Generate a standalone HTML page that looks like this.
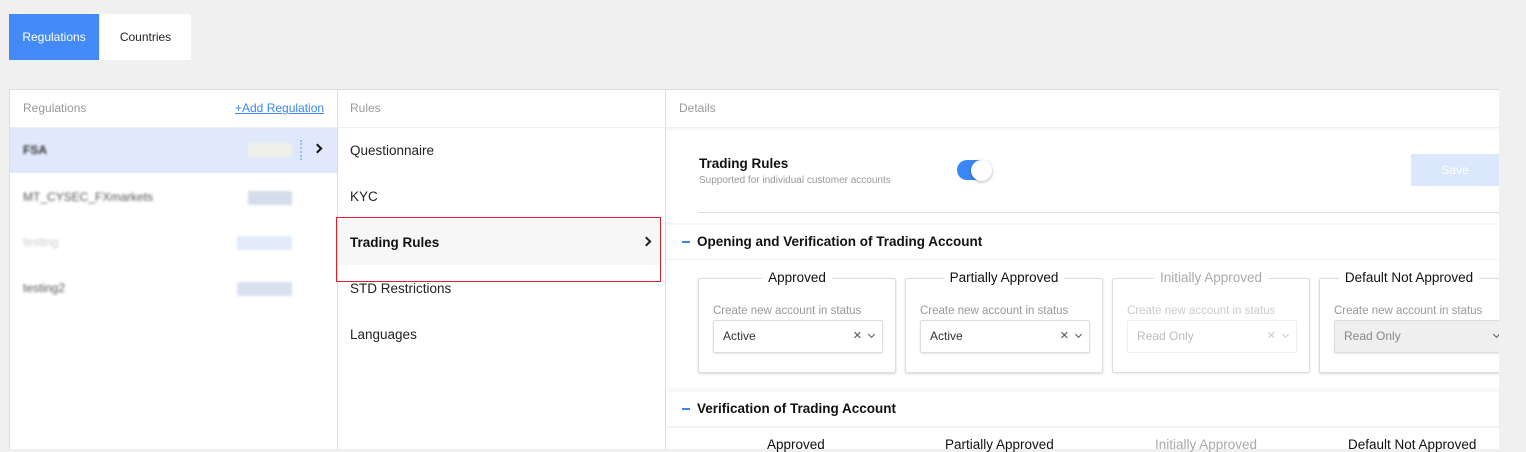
<!DOCTYPE html>
<html><head><meta charset="utf-8"><style>
*{box-sizing:border-box;margin:0;padding:0}
body{width:1526px;height:442px;background:#f0f0f0;font-family:"Liberation Sans",sans-serif;position:relative;overflow:hidden;color:#222}
.a{position:absolute}
.tab{top:14px;height:46px;line-height:46px;font-size:12px;text-align:center}
.blur{filter:blur(1.4px)}
.rule{left:350px;font-size:13.5px;color:#222}
.card{border:1px solid #ddd;border-radius:2px;box-shadow:0 1px 2px rgba(0,0,0,.15);background:#fff;top:278px;height:95px;width:198px}
.ct{position:absolute;top:-9px;left:0;right:0;text-align:center;font-size:13.5px;color:#111}
.ct span{background:#fff;padding:0 6px}
.lab{position:absolute;left:14px;top:26px;font-size:11.5px;color:#999}
.sel{position:absolute;left:14px;top:41px;width:170px;height:33px;border:1px solid #ddd;border-radius:2px;box-shadow:0 1px 2px rgba(0,0,0,.1);font-size:12px;line-height:31px;padding-left:9px;color:#333}
.x{position:absolute;right:20px;top:0;font-size:11px;color:#555}
.v{position:absolute;right:8px;width:5px;height:5px;border-right:1.5px solid #555;border-bottom:1.5px solid #555;transform:rotate(45deg);top:11px}
.sec{left:666px;width:833px;height:34px;background:#fff;box-shadow:0 1px 3px rgba(0,0,0,.06)}
.sec b{position:absolute;left:31px;top:9px;font-size:13.5px;color:#111}
.sec i{position:absolute;left:16px;top:16px;width:8px;height:2px;background:#3b86f7}
</style></head><body>
<div class="a tab" style="left:9px;width:90px;background:#438af7;color:#fff">Regulations</div>
<div class="a tab" style="left:100px;width:91px;background:#fff;color:#222">Countries</div>

<div class="a" style="left:9px;top:89px;width:1490px;height:360px;background:#fff;border-top:1px solid #ddd"></div>
<div class="a" style="left:9px;top:89px;width:1px;height:360px;background:#ddd"></div>
<div class="a" style="left:337px;top:89px;width:1px;height:360px;background:#ddd"></div>
<div class="a" style="left:665px;top:89px;width:1px;height:360px;background:#ddd"></div>
<div class="a" style="left:10px;top:127px;width:1489px;height:1px;background:#eee"></div>
<div class="a" style="left:23px;top:101px;font-size:12px;color:#999">Regulations</div>
<div class="a" style="left:235px;top:101px;font-size:12px;color:#3b86f7;text-decoration:underline">+Add Regulation</div>
<div class="a" style="left:350px;top:101px;font-size:12px;color:#999">Rules</div>
<div class="a" style="left:679px;top:101px;font-size:12px;color:#999">Details</div>

<div class="a" style="left:10px;top:128px;width:327px;height:45px;background:#dfe9fb"></div>
<div class="a blur" style="left:23px;top:143px;font-size:12px;color:#333;font-weight:bold">FSA</div>
<div class="a blur" style="left:248px;top:143px;width:44px;height:14px;background:#f0f0ea"></div>
<div class="a" style="left:300px;top:140px;width:2px;height:20px;border-left:2px dotted #9bbcf5"></div>
<div class="a" style="left:314px;top:145px;width:7px;height:7px;border-right:2px solid #111;border-top:2px solid #111;transform:rotate(45deg)"></div>
<div class="a blur" style="left:23px;top:190px;font-size:12px;color:#555">MT_CYSEC_FXmarkets</div>
<div class="a blur" style="left:248px;top:191px;width:44px;height:14px;background:#d5dcec"></div>
<div class="a blur" style="left:23px;top:235px;font-size:12px;color:#ccc">testing</div>
<div class="a blur" style="left:237px;top:236px;width:55px;height:14px;background:#e1ebfa"></div>
<div class="a blur" style="left:23px;top:281px;font-size:12px;color:#555">testing2</div>
<div class="a blur" style="left:237px;top:282px;width:55px;height:14px;background:#d9e1f1"></div>

<div class="a rule" style="top:143px">Questionnaire</div>
<div class="a rule" style="top:189px">KYC</div>
<div class="a" style="left:338px;top:219px;width:322px;height:46px;background:#f7f7f7"></div>
<div class="a rule" style="top:235px;font-weight:bold;color:#111">Trading Rules</div>
<div class="a" style="left:643px;top:238px;width:7px;height:7px;border-right:2px solid #222;border-top:2px solid #222;transform:rotate(45deg)"></div>
<div class="a" style="left:336px;top:217px;width:325px;height:65px;border:1.5px solid #e0202a"></div>
<div class="a rule" style="top:281px">STD Restrictions</div>
<div class="a rule" style="top:327px">Languages</div>

<div class="a" style="left:666px;top:128px;width:833px;height:314px;background:#f9f9f9"></div>
<div class="a" style="left:666px;top:131px;width:833px;height:92px;background:#fff"></div>
<div class="a" style="left:699px;top:156px;font-size:13.5px;font-weight:bold;color:#111">Trading Rules</div>
<div class="a" style="left:699px;top:175px;font-size:10px;color:#999">Supported for individual customer accounts</div>
<div class="a" style="left:957px;top:160px;width:34px;height:20px;border-radius:10px;background:#3b86f7"></div>
<div class="a" style="left:971px;top:160px;width:21px;height:21px;border-radius:50%;background:#fff;box-shadow:0 1px 3px rgba(0,0,0,.3)"></div>
<div class="a" style="left:1411px;top:154px;width:88px;height:32px;background:#dbe7fc;color:#fff;font-size:12px;text-align:center;line-height:32px">Save</div>
<div class="a" style="left:698px;top:212px;width:801px;height:1px;background:#ddd"></div>

<div class="a sec" style="top:225px"><i></i><b>Opening and Verification of Trading Account</b></div>
<div class="a" style="left:666px;top:260px;width:833px;height:128px;background:#fff"></div>

<div class="a card" style="left:698px"><div class="ct"><span>Approved</span></div><div class="lab">Create new account in status</div><div class="sel">Active<span class="x">✕</span><span class="v"></span></div></div>
<div class="a card" style="left:905px"><div class="ct"><span>Partially Approved</span></div><div class="lab">Create new account in status</div><div class="sel">Active<span class="x">✕</span><span class="v"></span></div></div>
<div class="a card" style="left:1112px;box-shadow:0 1px 2px rgba(0,0,0,.08)"><div class="ct" style="color:#aaa"><span>Initially Approved</span></div><div class="lab" style="color:#ccc">Create new account in status</div><div class="sel" style="color:#bbb;box-shadow:none;border-color:#eee">Read Only<span class="x" style="color:#ccc">✕</span><span class="v" style="border-color:#ccc"></span></div></div>
<div class="a card" style="left:1319px;width:190px"><div class="ct" style="right:0;left:-10px"><span>Default Not Approved</span></div><div class="lab">Create new account in status</div><div class="sel" style="background:#efefef;color:#888;width:180px">Read Only<span class="v" style="right:14px"></span></div></div>
<div class="a" style="left:1499px;top:89px;width:27px;height:353px;background:#f0f0f0"></div>

<div class="a sec" style="top:392px"><i></i><b>Verification of Trading Account</b></div>
<div class="a" style="left:666px;top:428px;width:833px;height:14px;background:#fff"></div>
<div class="a" style="left:767px;top:437px;font-size:13.5px;color:#111">Approved</div>
<div class="a" style="left:945px;top:437px;font-size:13.5px;color:#111">Partially Approved</div>
<div class="a" style="left:1155px;top:437px;font-size:13.5px;color:#aaa">Initially Approved</div>
<div class="a" style="left:1348px;top:437px;font-size:13.5px;color:#111">Default Not Approved</div>
</body></html>
